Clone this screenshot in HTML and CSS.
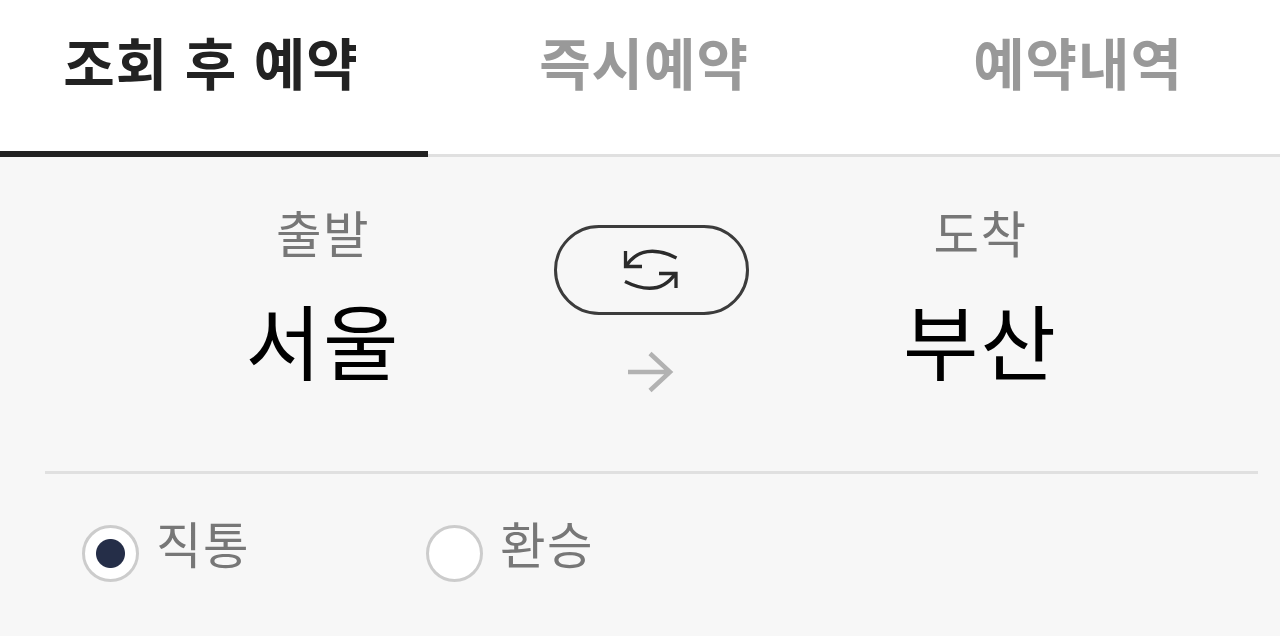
FILE: index.html
```html
<!DOCTYPE html>
<html lang="ko">
<head>
<meta charset="utf-8">
<title>승차권 예약</title>
<link rel="stylesheet" href="styles.css">
</head>
<body>
<nav class="tabs">
  <a class="tab tab-active">조회 후 예약</a>
  <a class="tab">즉시예약</a>
  <a class="tab tab-last">예약내역</a>
</nav>
<main class="panel">
  <section class="route">
    <div class="station departure">
      <span class="label">출발</span>
      <span class="city">서울</span>
    </div>
    <div class="middle">
      <button class="swap" aria-label="출발 도착 바꾸기">
        <svg width="60" height="46" viewBox="0 0 60 46" fill="none" stroke="#2b2b2b" stroke-width="3.300">
          <path d="M4.500 4V19.500H21M5.500 18.500C16 2.500 34 0 55.500 11"/>
          <path d="M55 41V26.500H38M54 27C43 43 26 45.500 4 34.500"/>
        </svg>
      </button>
      <svg class="arrow" width="46" height="42" viewBox="0 0 46 42" fill="none" stroke="#b2b2b2" stroke-width="4.500">
        <path d="M0 21H42M22 2.500L42 21L22 39.500"/>
      </svg>
    </div>
    <div class="station arrival">
      <span class="label">도착</span>
      <span class="city">부산</span>
    </div>
  </section>
  <section class="options">
    <label class="option"><span class="radio radio-on"></span><span class="option-text">직통</span></label>
    <label class="option"><span class="radio"></span><span class="option-text">환승</span></label>
  </section>
</main>
</body>
</html>
```
FILE: styles.css
```css
* { box-sizing: border-box; }
body {
  margin: 0;
  height: 636px;
  overflow: hidden;
  background: #f7f7f7;
  color: #000;
  font-family: "Noto Sans CJK KR", sans-serif;
}
.tabs {
  display: grid;
  grid-template-columns: 428px 432px 420px;
  height: 157px;
  background: #fff;
}
.tab {
  display: flex;
  justify-content: center;
  padding-top: 17px;
  border-bottom: 3px solid #e0e0e0;
  color: #999;
  font-size: 56px;
  font-weight: 700;
  line-height: 88px;
  letter-spacing: 0.9px;
  white-space: nowrap;
}
.tab-active {
  padding-right: 6px;
  border-bottom: 6px solid #222;
  color: #222;
}
.tab-last { padding-left: 16px; }
.panel { padding: 0 22px 0 45px; }
.route {
  display: grid;
  grid-template-columns: 509px 194px 510px;
  height: 317px;
  border-bottom: 3px solid #e0e0e0;
}
.station {
  display: flex;
  flex-direction: column;
  align-items: center;
  padding-top: 40px;
}
.departure { padding-left: 47px; }
.arrival { padding-right: 45px; }
.label {
  color: #777;
  font-size: 49.500px;
  line-height: 70px;
  letter-spacing: 1.500px;
}
.city {
  margin-top: 17px;
  font-size: 82px;
  line-height: 110px;
  letter-spacing: 2px;
}
.middle {
  display: flex;
  flex-direction: column;
  align-items: center;
  padding-top: 68px;
}
.swap {
  display: flex;
  flex-shrink: 0;
  align-items: center;
  justify-content: center;
  width: 195px;
  height: 90px;
  padding: 0;
  border: 3px solid #3c3c3c;
  border-radius: 45px;
  background: transparent;
}
.arrow { margin-top: 36px; }
.options { display: flex; padding: 51px 0 0 37px; }
.option { display: flex; width: 344px; }
.radio {
  width: 57px;
  height: 57px;
  border: 3px solid #ccc;
  border-radius: 50%;
  background: #fff;
}
.radio-on { background: radial-gradient(circle, #252e48 14px, #fff 15px); }
.option-text {
  margin: -17px 0 0 17px;
  color: #777;
  font-size: 49.500px;
  line-height: 70px;
  letter-spacing: 1.500px;
}
```
